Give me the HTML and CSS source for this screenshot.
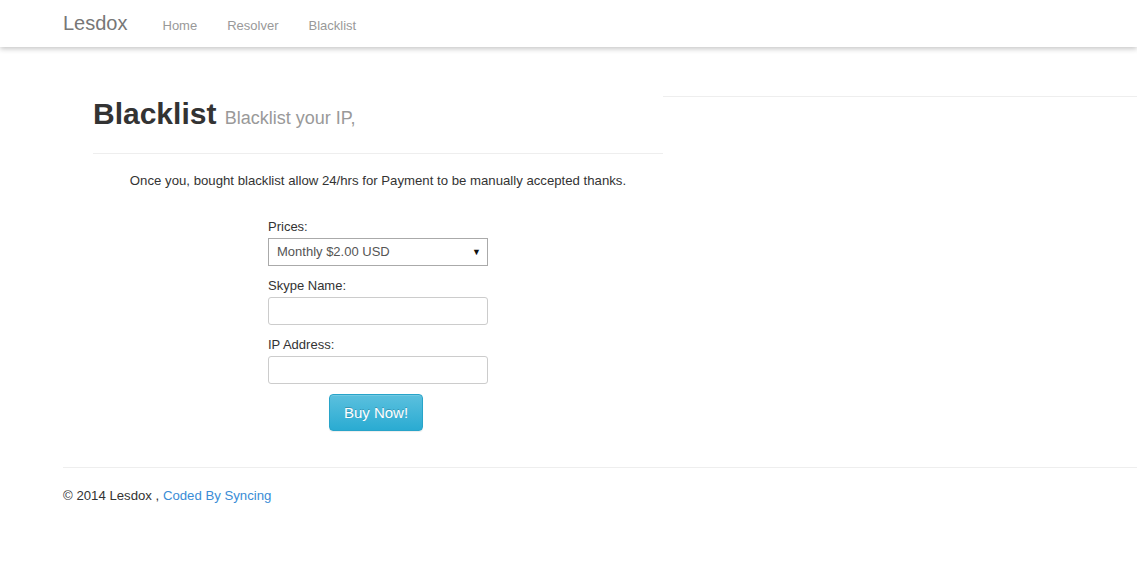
FILE: index.html
```html
<!DOCTYPE html>
<html>
<head>
<meta charset="utf-8">
<title>Lesdox - Blacklist</title>
<link rel="stylesheet" href="styles.css">
</head>
<body>
<nav class="navbar">
  <div class="nav-inner">
    <a class="brand" href="#">Lesdox</a>
    <ul class="nav-links">
      <li><a href="#">Home</a></li>
      <li><a href="#">Resolver</a></li>
      <li><a href="#">Blacklist</a></li>
    </ul>
  </div>
</nav>
<main class="content">
  <section class="main-col">
    <div class="page-header">
      <h1>Blacklist <small>Blacklist your IP,</small></h1>
    </div>
    <p class="notice">Once you, bought blacklist allow 24/hrs for Payment to be manually accepted thanks.</p>
    <form class="buy-form">
      <label class="field-label" for="price">Prices:</label>
      <div class="select-box" id="price">
        <span>Monthly $2.00 USD</span>
        <span class="caret">&#9660;</span>
      </div>
      <label class="field-label" for="skype">Skype Name:</label>
      <input class="text-input" id="skype" type="text">
      <label class="field-label" for="ip">IP Address:</label>
      <input class="text-input" id="ip" type="text">
      <div class="btn-row"><button class="btn-info" type="button">Buy Now!</button></div>
    </form>
  </section>
  <aside class="side-col"></aside>
</main>
<footer class="footer">
  <p>&copy; 2014 Lesdox , <a href="#">Coded By Syncing</a></p>
</footer>
</body>
</html>
```
FILE: styles.css
```css
* { box-sizing: border-box; }
html, body { margin: 0; padding: 0; }
body {
  font-family: "Liberation Sans", Arial, sans-serif;
  font-size: 13px;
  line-height: 18px;
  color: #333;
  background: #fff;
}
a { text-decoration: none; }

.navbar {
  height: 47px;
  background: #fff;
  box-shadow: 0 2px 5px rgba(0, 0, 0, 0.22);
  position: relative;
}
.nav-inner {
  display: flex;
  align-items: center;
  height: 47px;
  padding-left: 63px;
}
.brand {
  font-size: 20px;
  color: #777;
  margin-right: 35px;
  margin-top: -2px;
}
.nav-links {
  display: flex;
  list-style: none;
  margin: 4px 0 0;
  padding: 0;
  gap: 30px;
}
.nav-links a {
  color: #999;
  font-size: 13px;
}

.content {
  display: flex;
  padding-top: 49px;
}
.main-col {
  width: 570px;
  margin-left: 93px;
}
.side-col {
  flex: 1;
  border-top: 1px solid #eee;
  align-self: flex-start;
}
.page-header {
  padding-top: 1px;
  padding-bottom: 18px;
  border-bottom: 1px solid #eee;
}
.page-header h1 {
  margin: 0;
  font-size: 30px;
  line-height: 33px;
  font-weight: bold;
  color: #333;
}
.page-header h1 small {
  font-size: 18px;
  font-weight: normal;
  color: #999;
}
.notice {
  margin: 18px 0 0;
  text-align: center;
  font-size: 13.2px;
}
.buy-form {
  width: 220px;
  margin: 27px auto 0;
  display: flex;
  flex-direction: column;
}
.field-label {
  display: block;
  padding-top: 1px;
  margin-bottom: 2px;
}
.select-box {
  height: 28px;
  border: 1px solid #aaa;
  display: flex;
  align-items: center;
  justify-content: space-between;
  padding: 0 6px 0 8px;
  color: #555;
  margin-bottom: 10px;
}
.caret {
  font-size: 9px;
  color: #111;
}
.text-input {
  height: 28px;
  border: 1px solid #ccc;
  border-radius: 3px;
  margin: 0 0 10px;
  padding: 0 8px;
  font: inherit;
}
.btn-row {
  display: flex;
  justify-content: center;
  padding-right: 4px;
}
.btn-info {
  width: 94px;
  height: 37px;
  font-family: inherit;
  font-size: 15px;
  color: #fff;
  border: 1px solid #28a4c9;
  border-radius: 4px;
  background: linear-gradient(to bottom, #5bc0de 0%, #2aabd2 100%);
  box-shadow: inset 0 1px 0 rgba(255, 255, 255, 0.15), 0 1px 1px rgba(0, 0, 0, 0.075);
  text-shadow: 0 -1px 0 rgba(0, 0, 0, 0.2);
  padding: 0;
}

.footer {
  margin: 36px 0 0 63px;
  border-top: 1px solid #eee;
}
.footer p {
  margin: 19px 0 0;
  font-size: 13.2px;
}
.footer a {
  color: #3a8cd6;
}
```
